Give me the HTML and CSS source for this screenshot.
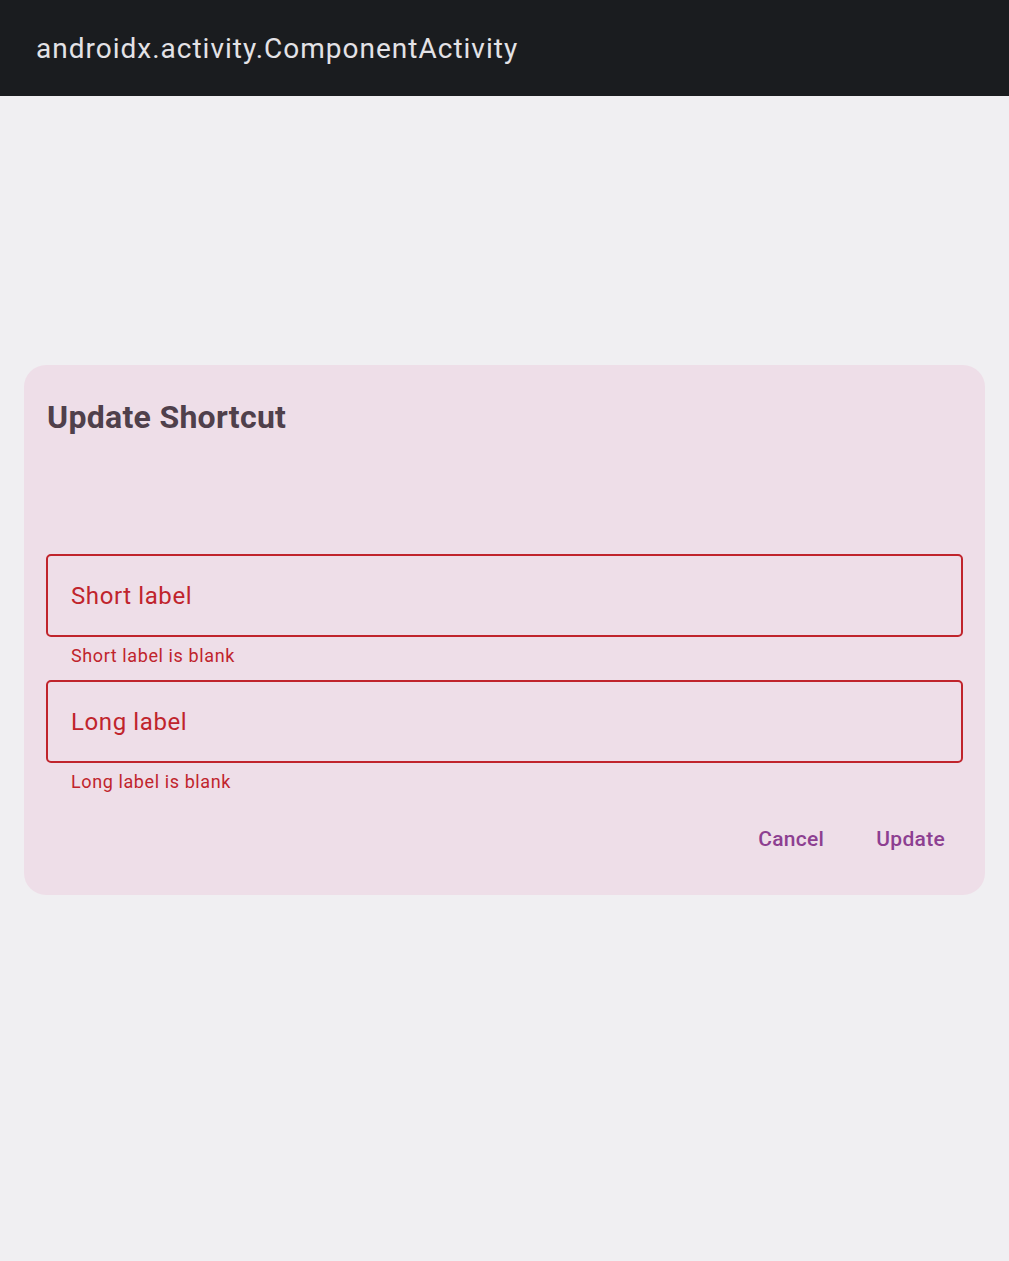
FILE: index.html
```html
<!DOCTYPE html>
<html>
<head>
<meta charset="utf-8">
<link rel="stylesheet" href="styles.css">
</head>
<body>
<header class="appbar"><span class="appbar-title">androidx.activity.ComponentActivity</span></header>
<main class="screen">
  <section class="dialog">
    <h1 class="dialog-title">Update Shortcut</h1>
    <div class="fields">
      <div class="field">
        <div class="field-box"><span class="field-label">Short label</span></div>
        <div class="field-error">Short label is blank</div>
      </div>
      <div class="field">
        <div class="field-box"><span class="field-label">Long label</span></div>
        <div class="field-error">Long label is blank</div>
      </div>
    </div>
    <div class="actions">
      <button class="btn">Cancel</button>
      <button class="btn">Update</button>
    </div>
  </section>
</main>
</body>
</html>
```

FILE: styles.css
```css
* { box-sizing: border-box; }
html, body { margin: 0; padding: 0; }
body {
  width: 1009px;
  height: 1261px;
  background: #f0eff2;
  font-family: Roboto, "Noto Sans", sans-serif;
  overflow: hidden;
}
.appbar {
  height: 96px;
  background: #1a1c1f;
  display: flex;
  align-items: center;
  padding-left: 36px;
}
.appbar-title {
  color: #e3e2e6;
  font-size: 28px;
  font-weight: 400;
  line-height: 32px;
  letter-spacing: 1px;
  margin-top: 2px;
}
.screen {
  padding: 269px 24px 0 24px;
}
.dialog {
  background: #eedee8;
  border-radius: 22px;
  padding: 33px 22px 20px 22px;
  height: 530px;
  display: flex;
  flex-direction: column;
}
.dialog-title {
  margin: 0 0 0 1px;
  font-size: 32px;
  font-weight: 700;
  line-height: 38px;
  letter-spacing: 0.3px;
  color: #4f404b;
}
.fields {
  margin-top: 118px;
  display: flex;
  flex-direction: column;
  gap: 14px;
}
.field-box {
  height: 83px;
  border: 2px solid #c0242c;
  border-radius: 5px;
  display: flex;
  align-items: center;
  padding-left: 23px;
}
.field-label {
  color: #c0242c;
  font-size: 24px;
  line-height: 28px;
  letter-spacing: 0.6px;
  margin-top: 1px;
}
.field-error {
  color: #c0242c;
  font-size: 18px;
  line-height: 20px;
  padding-left: 25px;
  margin-top: 9px;
  letter-spacing: 0.6px;
}
.actions {
  margin-top: 25px;
  display: flex;
  justify-content: flex-end;
  gap: 16px;
}
.btn {
  background: none;
  border: none;
  font-family: Roboto, "Noto Sans", sans-serif;
  font-size: 21px;
  font-weight: 500;
  color: #8d3f91;
  padding: 10px 18px;
  line-height: 24px;
  letter-spacing: 0.3px;
}
```
